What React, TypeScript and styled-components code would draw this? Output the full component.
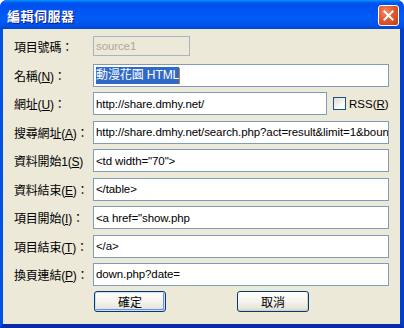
import React from 'react';
import styled, { createGlobalStyle } from 'styled-components';

const GlobalStyle = createGlobalStyle`
  html, body {
    margin: 0;
    padding: 0;
    background: #ffffff;
  }
`;

const cjk = `"Liberation Sans", "Noto Sans CJK TC", sans-serif`;

// 視窗外框
const Window = styled.div`
  width: 404px;
  height: 328px;
  display: flex;
  flex-direction: column;
  border-radius: 7px 7px 0 0;
  overflow: hidden;
  background: #0831d9;
  font-family: ${cjk};
`;

const TitleBar = styled.div`
  height: 29px;
  flex: none;
  display: flex;
  align-items: center;
  justify-content: space-between;
  padding: 0 5px 0 7px;
  background: linear-gradient(
    to bottom,
    #0997ff 0px,
    #0053ee 3px,
    #0050ee 6px,
    #0058f6 12px,
    #005bf5 20px,
    #0050e6 26px,
    #0045d6 29px
  );
`;

const Title = styled.div`
  color: #ffffff;
  font-size: 13px;
  font-weight: bold;
  letter-spacing: 0.5px;
  text-shadow: 1px 1px 0 #0a1883;
  font-family: "Noto Sans CJK TC", sans-serif;
  margin-top: 1px;
`;

const CloseButton = styled.div`
  width: 19px;
  height: 19px;
  border: 1px solid #ffffff;
  border-radius: 3px;
  background: radial-gradient(circle at 35% 30%, #f08a6a 0%, #e2592f 45%, #c33d15 100%);
  display: flex;
  align-items: center;
  justify-content: center;
  margin-top: 1px;
`;

const Frame = styled.div`
  flex: 1;
  display: flex;
  flex-direction: column;
  border-left: 3px solid #0052e4;
  border-right: 4px solid #0040c8;
  border-bottom: 4px solid #0a2aa8;
  background: #ece9d8;
  padding: 7px 11px 0 11px;
`;

const Rows = styled.div`
  display: flex;
  flex-direction: column;
  gap: 5.43px;
`;

const Row = styled.div<{ $first?: boolean }>`
  display: grid;
  grid-template-columns: 79px 1fr;
  align-items: center;
  height: ${(p) => (p.$first ? '20px' : '23px')};
  margin-bottom: ${(p) => (p.$first ? '2.6px' : '0')};
`;

const Label = styled.div`
  font-family: ${cjk};
  font-size: 12px;
  color: #000;
  white-space: nowrap;
  letter-spacing: -0.2px;

  u {
    text-decoration: underline;
    text-underline-offset: 1px;
  }
`;

const Field = styled.div<{ $disabled?: boolean }>`
  height: 100%;
  box-sizing: border-box;
  border: 1px solid ${(p) => (p.$disabled ? '#a5b5c6' : '#7f9db9')};
  background: ${(p) => (p.$disabled ? '#ece9d8' : '#ffffff')};
  color: ${(p) => (p.$disabled ? '#aca899' : '#000000')};
  font-family: ${cjk};
  font-size: 11.5px;
  letter-spacing: -0.1px;
  padding: 0 2px;
  display: flex;
  align-items: center;
  white-space: nowrap;
  overflow: hidden;
`;

const Selected = styled.span`
  background: #316ac5;
  color: #ffffff;
  font-family: ${cjk};
  font-size: 12px;
  line-height: 17px;
`;

const Caret = styled.span`
  display: inline-block;
  width: 1px;
  height: 16px;
  background: #c08030;
`;

const UrlLine = styled.div`
  display: flex;
  align-items: center;
  height: 100%;
`;

const UrlField = styled(Field)`
  width: 234px;
  flex: none;
`;

const Check = styled.div`
  width: 11px;
  height: 11px;
  border: 1px solid #1c5180;
  background: linear-gradient(135deg, #dcdcd7 0%, #ffffff 80%);
  margin-left: 6px;
  flex: none;
`;

const CheckLabel = styled.span`
  font-family: ${cjk};
  font-size: 11.5px;
  margin-left: 3px;
`;

const Buttons = styled.div`
  display: flex;
  gap: 71px;
  margin: 5.4px 0 0 80px;
`;

const Button = styled.div<{ $default?: boolean }>`
  width: 72px;
  height: 21px;
  box-sizing: border-box;
  border: 1px solid #003c74;
  border-radius: 3px;
  background: linear-gradient(to bottom, #ffffff 0%, #f4f3ee 50%, #e8e6dc 85%, #d6d0c5 100%);
  box-shadow: ${(p) =>
    p.$default ? 'inset 0 0 0 1px #ceddfa, inset -1px -1px 0 1px #6c8ee0' : 'inset -1px -1px 0 0 #d6d0c5'};
  display: flex;
  align-items: center;
  justify-content: center;
  font-family: "Noto Sans CJK TC", sans-serif;
  font-size: 12px;
  color: #000;
`;

const rows: { label: React.ReactNode; value: string }[] = [
  { label: <>搜尋網址(<u>A</u>)：</>, value: 'http://share.dmhy.net/search.php?act=result&limit=1&boun' },
  { label: <>資料開始1(<u>S</u>)</>, value: '<td width="70">' },
  { label: <>資料結束(<u>E</u>)：</>, value: '</table>' },
  { label: <>項目開始(<u>I</u>)：</>, value: '<a href="show.php' },
  { label: <>項目結束(<u>T</u>)：</>, value: '</a>' },
  { label: <>換頁連結(<u>P</u>)：</>, value: 'down.php?date=' },
];

const App: React.FC = () => {
  return (
    <>
      <GlobalStyle />
      <Window>
        <TitleBar>
          <Title>編輯伺服器</Title>
          <CloseButton>
            <svg width="11" height="11" viewBox="0 0 11 11">
              <path d="M1.5 1.5 L9.5 9.5 M9.5 1.5 L1.5 9.5" stroke="#ffffff" strokeWidth="2" strokeLinecap="square" />
            </svg>
          </CloseButton>
        </TitleBar>
        <Frame>
          <Rows>
            <Row $first>
              <Label>項目號碼：</Label>
              <Field $disabled style={{ width: 97 }}>source1</Field>
            </Row>
            <Row>
              <Label>名稱(<u>N</u>)：</Label>
              <Field>
                <Selected>動漫花園 HTML</Selected>
                <Caret />
              </Field>
            </Row>
            <Row>
              <Label>網址(<u>U</u>)：</Label>
              <UrlLine>
                <UrlField>http://share.dmhy.net/</UrlField>
                <Check />
                <CheckLabel>RSS(<u>R</u>)</CheckLabel>
              </UrlLine>
            </Row>
            {rows.map((r, i) => (
              <Row key={i}>
                <Label>{r.label}</Label>
                <Field>{r.value}</Field>
              </Row>
            ))}
          </Rows>
          <Buttons>
            <Button $default>確定</Button>
            <Button>取消</Button>
          </Buttons>
        </Frame>
      </Window>
    </>
  );
};

export default App;
